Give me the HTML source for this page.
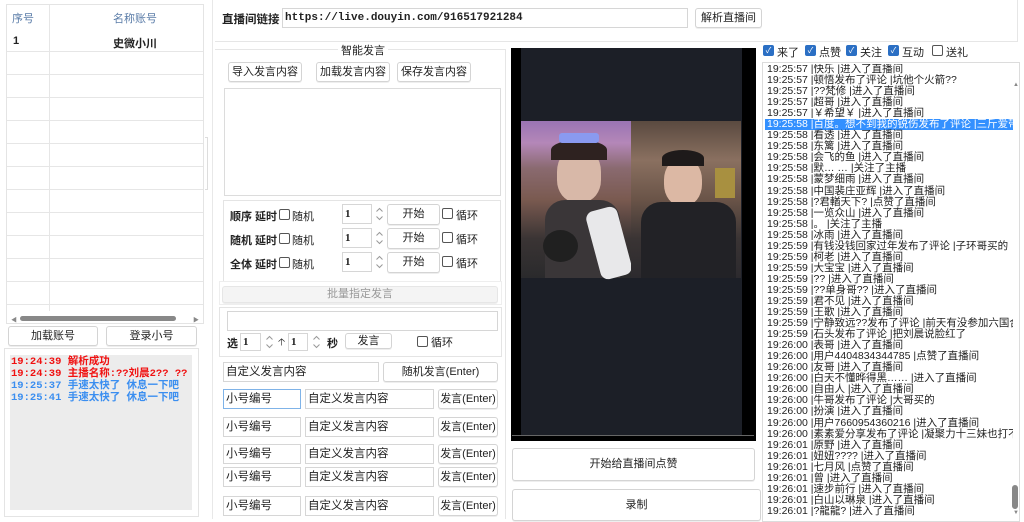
<!DOCTYPE html>
<html><head><meta charset="utf-8"><style>
*{box-sizing:border-box;margin:0;padding:0}
body{width:1024px;height:519px;overflow:hidden;background:#fff;font-family:"Liberation Sans","Noto Sans CJK SC",sans-serif;font-size:11px;color:#222;position:relative}
.a{position:absolute}
.btn{position:absolute;border:1px solid #d4d4d4;border-radius:3px;background:#fff;text-align:center;font-size:11px;color:#222;box-shadow:0 1px 0 #eee}
.inp{position:absolute;border:1px solid #d6d6d6;background:#fff;font-size:11px;padding-left:2px}
.cb{position:absolute;width:11px;height:11px;border:1px solid #555;border-radius:2px;background:#fff}
.cbc{position:absolute;width:11px;height:11px;border-radius:2px;background:#2b6fc4;color:#fff;font-size:8px;line-height:11px;text-align:center}
.b{font-weight:bold}
.hl{position:absolute;height:1px;background:#e6e6e6}
.vl{position:absolute;width:1px;background:#e6e6e6}
.spin{position:absolute;width:9px;height:16px}
#log div{height:11.05px;line-height:11.05px;white-space:nowrap;font-size:10.5px;padding-left:2px}
</style></head><body>
<svg width="0" height="0" style="position:absolute"><defs><symbol id="sp" viewBox="0 0 9 16"><path d="M1.5 5.5L4.5 2.5L7.5 5.5M1.5 10.5L4.5 13.5L7.5 10.5" fill="none" stroke="#999" stroke-width="1"/></symbol></defs></svg>

<div class="a" style="left:6px;top:4px;width:198px;height:320px;border:1px solid #e4e4e4"></div>
<div class="a" style="left:12px;top:10px;color:#5a7ca8">序号</div>
<div class="a" style="left:113px;top:10px;color:#5a7ca8">名称账号</div>
<div class="a b" style="left:13px;top:35px">1</div>
<div class="a b" style="left:113px;top:35px">史微小川</div>
<div class="vl" style="left:49px;top:5px;height:306px"></div>
<div class="hl" style="left:7px;top:51px;width:196px"></div>
<div class="hl" style="left:7px;top:74px;width:196px"></div>
<div class="hl" style="left:7px;top:97px;width:196px"></div>
<div class="hl" style="left:7px;top:120px;width:196px"></div>
<div class="hl" style="left:7px;top:143px;width:196px"></div>
<div class="hl" style="left:7px;top:166px;width:196px"></div>
<div class="hl" style="left:7px;top:189px;width:196px"></div>
<div class="hl" style="left:7px;top:212px;width:196px"></div>
<div class="hl" style="left:7px;top:235px;width:196px"></div>
<div class="hl" style="left:7px;top:258px;width:196px"></div>
<div class="hl" style="left:7px;top:281px;width:196px"></div>
<div class="hl" style="left:7px;top:304px;width:196px"></div>
<div class="a" style="left:20px;top:316px;width:156px;height:5px;border-radius:3px;background:#888"></div>
<div class="a" style="left:11px;top:315px;font-size:6px;color:#888">◀</div>
<div class="a" style="left:193px;top:315px;font-size:6px;color:#888">▶</div>
<div class="a" style="left:205px;top:137px;width:3px;height:53px;border:1px solid #ddd;border-left:none"></div>
<div class="btn" style="left:8px;top:326px;width:90px;height:20px;line-height:18px">加载账号</div>
<div class="btn" style="left:106px;top:326px;width:91px;height:20px;line-height:18px">登录小号</div>
<div class="a" style="left:4px;top:348px;width:195px;height:169px;border:1px solid #e4e4e4"></div>
<div class="a" style="left:10px;top:355px;width:182px;height:155px;background:#ececec;font-family:'Liberation Mono','Noto Sans CJK SC',monospace;font-size:10.5px;font-weight:bold;line-height:12px;padding:1px 0 0 1px">
<div style="color:#f01010">19:24:39 解析成功</div>
<div style="color:#f01010">19:24:39 主播名称:??刘晨2?? ??</div>
<div style="color:#3a8ef0">19:25:37 手速太快了 休息一下吧</div>
<div style="color:#3a8ef0">19:25:41 手速太快了 休息一下吧</div>
</div>
<div class="vl" style="left:212px;top:0;height:519px;background:#e8e8e8"></div>

<div class="a b" style="left:222px;top:11px;font-size:11.5px">直播间链接</div>
<div class="inp" style="left:282px;top:8px;width:406px;height:20px;line-height:18px;font-family:'Liberation Mono',monospace;font-weight:bold;font-size:11px">https://live.douyin.com/916517921284</div>
<div class="btn" style="left:695px;top:8px;width:67px;height:20px;line-height:18px">解析直播间</div>
<div class="hl" style="left:215px;top:41px;width:803px"></div>
<div class="vl" style="left:1017px;top:0;height:42px"></div>

<div class="hl" style="left:215px;top:49px;width:290px"></div>
<div class="a" style="left:338px;top:42px;background:#fff;padding:0 3px">智能发言</div>
<div class="vl" style="left:505px;top:49px;height:470px"></div>
<div class="btn" style="left:228px;top:62px;width:74px;height:20px;line-height:18px">导入发言内容</div>
<div class="btn" style="left:316px;top:62px;width:74px;height:20px;line-height:18px">加载发言内容</div>
<div class="btn" style="left:397px;top:62px;width:74px;height:20px;line-height:18px">保存发言内容</div>
<div class="a" style="left:224px;top:88px;width:277px;height:108px;border:1px solid #dcdcdc"></div>
<div class="a" style="left:223px;top:200px;width:278px;height:82px;border:1px solid #e4e4e4"></div>

<div class="a b" style="left:230px;top:208px">顺序 延时</div><div class="cb" style="left:279px;top:209px"></div><div class="a" style="left:292px;top:208px">随机</div>
<div class="inp" style="left:342px;top:204px;width:30px;height:20px;line-height:18px;font-family:'Liberation Serif';font-weight:bold">1</div><svg class="spin" style="left:375px;top:206px"><use href="#sp"/></svg>
<div class="btn" style="left:387px;top:204px;width:53px;height:21px;line-height:19px">开始</div><div class="cb" style="left:442px;top:208px"></div><div class="a" style="left:456px;top:207px">循环</div>

<div class="a b" style="left:230px;top:232px">随机 延时</div><div class="cb" style="left:279px;top:233px"></div><div class="a" style="left:292px;top:232px">随机</div>
<div class="inp" style="left:342px;top:228px;width:30px;height:20px;line-height:18px;font-family:'Liberation Serif';font-weight:bold">1</div><svg class="spin" style="left:375px;top:230px"><use href="#sp"/></svg>
<div class="btn" style="left:387px;top:228px;width:53px;height:21px;line-height:19px">开始</div><div class="cb" style="left:442px;top:232px"></div><div class="a" style="left:456px;top:231px">循环</div>

<div class="a b" style="left:230px;top:256px">全体 延时</div><div class="cb" style="left:279px;top:257px"></div><div class="a" style="left:292px;top:256px">随机</div>
<div class="inp" style="left:342px;top:252px;width:30px;height:20px;line-height:18px;font-family:'Liberation Serif';font-weight:bold">1</div><svg class="spin" style="left:375px;top:254px"><use href="#sp"/></svg>
<div class="btn" style="left:387px;top:252px;width:53px;height:21px;line-height:19px">开始</div><div class="cb" style="left:442px;top:256px"></div><div class="a" style="left:456px;top:255px">循环</div>

<div class="a" style="left:219px;top:281px;width:283px;height:24px;border:1px solid #eee"></div>
<div class="btn" style="left:222px;top:286px;width:276px;height:17px;line-height:15px;color:#999;background:#f4f4f4;border-color:#e6e6e6">批量指定发言</div>
<div class="a" style="left:219px;top:307px;width:283px;height:50px;border:1px solid #e4e4e4"></div>
<div class="inp" style="left:227px;top:311px;width:271px;height:20px"></div>
<div class="a b" style="left:227px;top:335px">选</div>
<div class="inp" style="left:240px;top:333px;width:21px;height:18px;line-height:16px;font-family:'Liberation Serif';font-weight:bold">1</div><svg class="spin" style="left:265px;top:334px"><use href="#sp"/></svg>
<div class="a" style="left:278px;top:335px;font-size:10px">🡡</div>
<div class="inp" style="left:288px;top:333px;width:20px;height:18px;line-height:16px;font-family:'Liberation Serif';font-weight:bold">1</div><svg class="spin" style="left:312px;top:334px"><use href="#sp"/></svg>
<div class="a b" style="left:327px;top:335px">秒</div>
<div class="btn" style="left:345px;top:333px;width:47px;height:16px;line-height:14px">发言</div>
<div class="cb" style="left:417px;top:336px"></div><div class="a" style="left:431px;top:334px">循环</div>

<div class="inp" style="left:223px;top:362px;width:156px;height:20px;line-height:18px;font-size:11.5px">自定义发言内容</div>
<div class="btn" style="left:383px;top:362px;width:115px;height:20px;line-height:18px">随机发言(Enter)</div>

<div class="inp" style="left:223px;top:389px;width:78px;height:20px;line-height:18px;font-size:11.5px;border-color:#7fb3e8">小号编号</div><div class="inp" style="left:305px;top:389px;width:129px;height:20px;line-height:18px;font-size:11.5px">自定义发言内容</div><div class="btn" style="left:438px;top:389px;width:60px;height:20px;line-height:18px">发言(Enter)</div>
<div class="inp" style="left:223px;top:417px;width:78px;height:20px;line-height:18px;font-size:11.5px">小号编号</div><div class="inp" style="left:305px;top:417px;width:129px;height:20px;line-height:18px;font-size:11.5px">自定义发言内容</div><div class="btn" style="left:438px;top:417px;width:60px;height:20px;line-height:18px">发言(Enter)</div>
<div class="inp" style="left:223px;top:444px;width:78px;height:20px;line-height:18px;font-size:11.5px">小号编号</div><div class="inp" style="left:305px;top:444px;width:129px;height:20px;line-height:18px;font-size:11.5px">自定义发言内容</div><div class="btn" style="left:438px;top:444px;width:60px;height:20px;line-height:18px">发言(Enter)</div>
<div class="inp" style="left:223px;top:467px;width:78px;height:20px;line-height:18px;font-size:11.5px">小号编号</div><div class="inp" style="left:305px;top:467px;width:129px;height:20px;line-height:18px;font-size:11.5px">自定义发言内容</div><div class="btn" style="left:438px;top:467px;width:60px;height:20px;line-height:18px">发言(Enter)</div>
<div class="inp" style="left:223px;top:496px;width:78px;height:20px;line-height:18px;font-size:11.5px">小号编号</div><div class="inp" style="left:305px;top:496px;width:129px;height:20px;line-height:18px;font-size:11.5px">自定义发言内容</div><div class="btn" style="left:438px;top:496px;width:60px;height:20px;line-height:18px">发言(Enter)</div>

<div class="a" style="left:511px;top:48px;width:245px;height:393px;background:#000"></div>
<div class="a" style="left:521px;top:48px;width:221px;height:387px;background:#1c1f27"></div>
<div class="a" style="left:512px;top:435px;width:242px;height:1px;background:#666"></div>
<div class="a" style="left:521px;top:121px;width:110px;height:157px;background:linear-gradient(180deg,#9a74b4 0%,#b487b8 14%,#8a6a70 30%,#7a5a50 50%,#3a3434 75%,#2a2a2c 100%)"></div>
<div class="a" style="left:557px;top:147px;width:44px;height:55px;border-radius:45% 45% 40% 40%;background:#d8b8a8"></div>
<div class="a" style="left:551px;top:140px;width:56px;height:20px;border-radius:50% 50% 0 0;background:#2e2220"></div>
<div class="a" style="left:559px;top:133px;width:40px;height:10px;background:#8a9af0;border-radius:3px"></div>
<div class="a" style="left:545px;top:200px;width:75px;height:78px;background:#3a3638;border-radius:20px 20px 0 0"></div>
<div class="a" style="left:593px;top:208px;width:32px;height:70px;background:#e8e8ea;border-radius:8px;transform:rotate(-15deg)"></div>
<div class="a" style="left:543px;top:230px;width:35px;height:32px;background:#202020;border-radius:50%"></div>
<div class="a" style="left:631px;top:121px;width:110px;height:157px;background:linear-gradient(180deg,#5a4a40 0%,#8a7060 25%,#6a5448 50%,#3a3434 75%,#2c2a2e 100%)"></div>
<div class="a" style="left:664px;top:158px;width:38px;height:48px;border-radius:45%;background:#dcb8a4"></div>
<div class="a" style="left:662px;top:150px;width:42px;height:16px;border-radius:50% 50% 0 0;background:#1e1a1a"></div>
<div class="a" style="left:641px;top:202px;width:95px;height:76px;background:#222226;border-radius:20px 20px 0 0"></div>
<div class="a" style="left:715px;top:168px;width:20px;height:30px;background:#a89040"></div>

<div class="btn" style="left:512px;top:448px;width:243px;height:33px;line-height:31px">开始给直播间点赞</div>
<div class="btn" style="left:512px;top:489px;width:249px;height:32px;line-height:30px">录制</div>

<div class="cbc" style="left:763px;top:45px">✓</div><div class="a" style="left:777px;top:44px">来了</div>
<div class="cbc" style="left:805px;top:45px">✓</div><div class="a" style="left:819px;top:44px">点赞</div>
<div class="cbc" style="left:846px;top:45px">✓</div><div class="a" style="left:860px;top:44px">关注</div>
<div class="cbc" style="left:888px;top:45px">✓</div><div class="a" style="left:902px;top:44px">互动</div>
<div class="cb" style="left:932px;top:45px"></div><div class="a" style="left:946px;top:44px">送礼</div>
<div class="a" style="left:762px;top:62px;width:258px;height:460px;border:1px solid #dcdcdc;overflow:hidden">
<div id="log" class="a" style="left:2px;top:1px;width:248px;overflow:hidden;font-family:'Liberation Sans','Noto Sans CJK SC',sans-serif;color:#222">
<div>19:25:57 |快乐 |进入了直播间</div>
<div>19:25:57 |顿悟发布了评论 |坑他个火箭??</div>
<div>19:25:57 |??梵修 |进入了直播间</div>
<div>19:25:57 |超哥 |进入了直播间</div>
<div>19:25:57 |￥希望￥ |进入了直播间</div>
<div style="background:#3390ff;color:#fff">19:25:58 |百度。想不到我的锐伤发布了评论 |三斤爱带我</div>
<div>19:25:58 |看透 |进入了直播间</div>
<div>19:25:58 |东篱 |进入了直播间</div>
<div>19:25:58 |会飞的鱼 |进入了直播间</div>
<div>19:25:58 |默… … |关注了主播</div>
<div>19:25:58 |蒙梦细雨 |进入了直播间</div>
<div>19:25:58 |中国裴庄亚辉 |进入了直播间</div>
<div>19:25:58 |?君輶天下? |点赞了直播间</div>
<div>19:25:58 |一览众山 |进入了直播间</div>
<div>19:25:58 |。 |关注了主播</div>
<div>19:25:58 |冰雨 |进入了直播间</div>
<div>19:25:59 |有钱没钱回家过年发布了评论 |子环哥买的</div>
<div>19:25:59 |柯老 |进入了直播间</div>
<div>19:25:59 |大宝宝 |进入了直播间</div>
<div>19:25:59 |?? |进入了直播间</div>
<div>19:25:59 |??单身哥?? |进入了直播间</div>
<div>19:25:59 |君不见 |进入了直播间</div>
<div>19:25:59 |王歌 |进入了直播间</div>
<div>19:25:59 |宁静致远??发布了评论 |前天有没参加六国合纵</div>
<div>19:25:59 |石头发布了评论 |把刘晨说脸红了</div>
<div>19:26:00 |表哥 |进入了直播间</div>
<div>19:26:00 |用户4404834344785 |点赞了直播间</div>
<div>19:26:00 |友哥 |进入了直播间</div>
<div>19:26:00 |白天不懂晔得黑…… |进入了直播间</div>
<div>19:26:00 |自由人 |进入了直播间</div>
<div>19:26:00 |牛哥发布了评论 |大哥买的</div>
<div>19:26:00 |扮演 |进入了直播间</div>
<div>19:26:00 |用户7660954360216 |进入了直播间</div>
<div>19:26:00 |素素爱分享发布了评论 |凝聚力十三妹也打不过</div>
<div>19:26:01 |原野 |进入了直播间</div>
<div>19:26:01 |妞妞???? |进入了直播间</div>
<div>19:26:01 |七月风 |点赞了直播间</div>
<div>19:26:01 |曾 |进入了直播间</div>
<div>19:26:01 |速步前行 |进入了直播间</div>
<div>19:26:01 |白山以琳泉 |进入了直播间</div>
<div>19:26:01 |?龍龍? |进入了直播间</div>
</div>
</div>
<div class="a" style="left:1013px;top:82px;font-size:6px;color:#888">▲</div>
<div class="a" style="left:1012px;top:485px;width:6px;height:24px;border-radius:3px;background:#888"></div>
<div class="a" style="left:1013px;top:510px;font-size:6px;color:#888">▼</div>
</body></html>
